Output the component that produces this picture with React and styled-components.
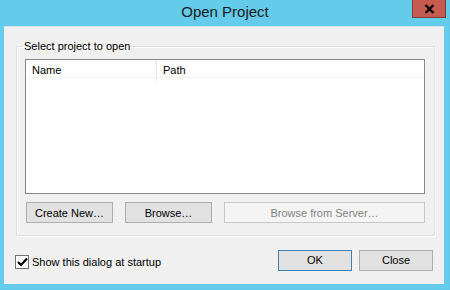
import React from "react";
import styled, { createGlobalStyle } from "styled-components";

const Global = createGlobalStyle`
  html, body { margin: 0; padding: 0; }
  body { width: 450px; height: 290px; overflow: hidden; background: #65cbea; }
  * { box-sizing: border-box; }
`;

const Window = styled.div`
  width: 450px;
  height: 290px;
  background: #65cbea;
  display: flex;
  flex-direction: column;
  padding: 0 6px 6px 4px;
  font-family: "Liberation Sans", Arial, sans-serif;
  font-size: 11px;
  color: #000;
`;

const TitleBar = styled.div`
  height: 26px;
  display: grid;
  grid-template-columns: 1fr auto 1fr;
  align-items: start;
  margin-right: -2px;
`;

const Title = styled.div`
  grid-column: 2;
  font-size: 15px;
  line-height: 24px;
  color: #1a1a1a;
`;

const CloseButton = styled.div`
  grid-column: 3;
  justify-self: end;
  width: 34px;
  height: 18px;
  background: #c75a50;
  border: 1px solid #7d3b35;
  border-top: none;
  display: flex;
  align-items: center;
  justify-content: center;
`;

const Panel = styled.div`
  flex: 1;
  background: #f0f0f0;
  border-top: 1px solid #d9e4ea;
  display: flex;
  flex-direction: column;
  padding: 13px 9px 0 12px;
`;

const Group = styled.fieldset`
  margin: 0;
  padding: 7px 9px 12px 8px;
  border: 1px solid #dcdcdc;
  box-shadow: inset 1px 1px 0 #fff, 1px 1px 0 #fff;
  border-radius: 2px;
`;

const Legend = styled.legend`
  padding: 0 2px;
  margin-left: -3px;
  line-height: 12px;
`;

const ListBox = styled.div`
  height: 135px;
  background: #fff;
  border: 1px solid #828790;
  display: flex;
  flex-direction: column;
`;

const HeaderRow = styled.div`
  display: grid;
  grid-template-columns: 131px 1fr;
  height: 18px;
  border-bottom: 1px solid #f4f4f4;
`;

const HeaderCell = styled.div`
  padding-left: 6px;
  line-height: 21px;
  color: #000;
  border-right: ${(p) => (p.$divider ? "1px solid #e5e5e5" : "none")};
`;

const ButtonRow = styled.div`
  display: grid;
  grid-template-columns: 87px 87px 1fr;
  column-gap: 12px;
  margin: 8px 0 0 1px;
`;

const Button = styled.div`
  height: 21px;
  display: flex;
  align-items: center;
  justify-content: center;
  background: ${(p) => (p.$disabled ? "#f4f4f4" : "#e1e1e1")};
  border: 1px solid ${(p) => (p.$default ? "#3c7fb1" : p.$disabled ? "#c8c8c8" : "#adadad")};
  color: ${(p) => (p.$disabled ? "#838383" : "#000")};
  width: ${(p) => p.$w || "auto"};
`;

const Footer = styled.div`
  flex: 1;
  display: flex;
  align-items: center;
  justify-content: space-between;
  padding: 0 2px 0 0;
  margin-left: -1px;
`;

const CheckLabel = styled.label`
  display: flex;
  align-items: center;
  gap: 3px;
  margin-top: 4px;
`;

const Box = styled.span`
  width: 14px;
  height: 14px;
  border: 1px solid #707070;
  background: #fff;
  display: flex;
  align-items: center;
  justify-content: center;
`;

const FooterButtons = styled.div`
  display: flex;
  gap: 7px;
`;

export default function App() {
  return (
    <>
      <Global />
      <Window>
        <TitleBar>
          <Title>Open Project</Title>
          <CloseButton>
            <svg width="11" height="10" viewBox="0 0 11 10">
              <path d="M1.5 1 L9.5 9 M9.5 1 L1.5 9" stroke="#000" strokeWidth="2.4" />
            </svg>
          </CloseButton>
        </TitleBar>
        <Panel>
          <Group>
            <Legend>Select project to open</Legend>
            <ListBox>
              <HeaderRow>
                <HeaderCell $divider>Name</HeaderCell>
                <HeaderCell>Path</HeaderCell>
              </HeaderRow>
            </ListBox>
            <ButtonRow>
              <Button>Create New…</Button>
              <Button>Browse…</Button>
              <Button $disabled>Browse from Server…</Button>
            </ButtonRow>
          </Group>
          <Footer>
            <CheckLabel>
              <Box>
                <svg width="11" height="10" viewBox="0 0 11 10">
                  <path d="M1 5 L4 8 L10 1.5" stroke="#000" strokeWidth="2.2" fill="none" />
                </svg>
              </Box>
              Show this dialog at startup
            </CheckLabel>
            <FooterButtons>
              <Button $default $w="74px">OK</Button>
              <Button $w="74px">Close</Button>
            </FooterButtons>
          </Footer>
        </Panel>
      </Window>
    </>
  );
}
